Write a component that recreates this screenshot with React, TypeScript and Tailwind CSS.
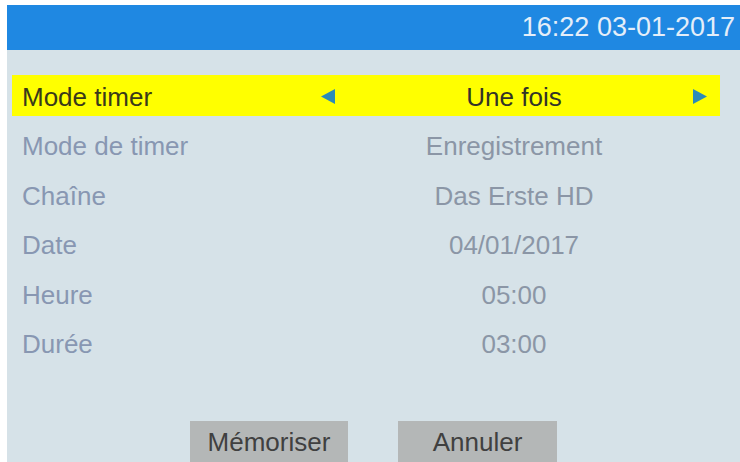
import React from 'react';

const ROWS = [
  { label: 'Mode de timer', value: 'Enregistrement' },
  { label: 'Chaîne', value: 'Das Erste HD' },
  { label: 'Date', value: '04/01/2017' },
  { label: 'Heure', value: '05:00' },
  { label: 'Durée', value: '03:00' },
];

function Arrow({ dir }: { dir: 'left' | 'right' }) {
  return (
    <svg width="16" height="17" viewBox="0 0 16 17" className="shrink-0">
      {dir === 'left' ? (
        <polygon points="15,1 15,16 1,8.5" fill="#2b8bb8" />
      ) : (
        <polygon points="1,1 1,16 15,8.5" fill="#2b8bb8" />
      )}
    </svg>
  );
}

function Row({ label, value, active }: { label: string; value: string; active?: boolean }) {
  return (
    <div
      className={`flex shrink-0 items-center h-[41px] ml-[5px] w-[708px] pt-[2px] ${
        active ? 'bg-[#ffff00]' : ''
      }`}
    >
      <div className={`w-[308px] shrink-0 pl-[10px] ${active ? 'text-[#3a3a1a]' : 'text-[#8897b2]'}`}>{label}</div>
      <div className="w-[16px] shrink-0 flex items-center justify-center">{active && <Arrow dir="left" />}</div>
      <div className={`w-[356px] shrink-0 text-center ${active ? 'text-[#333328]' : 'text-[#8b96a6]'}`}>{value}</div>
      <div className="w-[16px] shrink-0 flex items-center justify-center">{active && <Arrow dir="right" />}</div>
    </div>
  );
}

export default function App() {
  return (
    <div
      className="w-[740px] h-[462px] overflow-hidden bg-white pt-[5px] pl-[7px]"
      style={{ fontFamily: '"Liberation Sans", Arial, sans-serif' }}
    >
      <div className="h-[457px] bg-[#d6e2e8] flex flex-col text-[26px] leading-none">
        <div className="h-[45px] shrink-0 bg-[#1f88e2] flex items-center justify-end pr-[5px] text-[27px] text-[#e4eef9]">
          16:22 03-01-2017
        </div>

        <div className="flex flex-col shrink-0 gap-[8.5px] pt-[25px]">
          <Row label="Mode timer" value="Une fois" active />
          {ROWS.map((r) => (
            <Row key={r.label} label={r.label} value={r.value} />
          ))}
        </div>

        <div className="flex shrink-0 justify-center gap-[50px] mt-[57px]">
          <div className="w-[158px] h-[42px] bg-[#b4b7b7] text-[#404040] flex items-center justify-center">
            Mémoriser
          </div>
          <div className="w-[159px] h-[42px] bg-[#b4b7b7] text-[#404040] flex items-center justify-center">
            Annuler
          </div>
        </div>
      </div>
    </div>
  );
}
